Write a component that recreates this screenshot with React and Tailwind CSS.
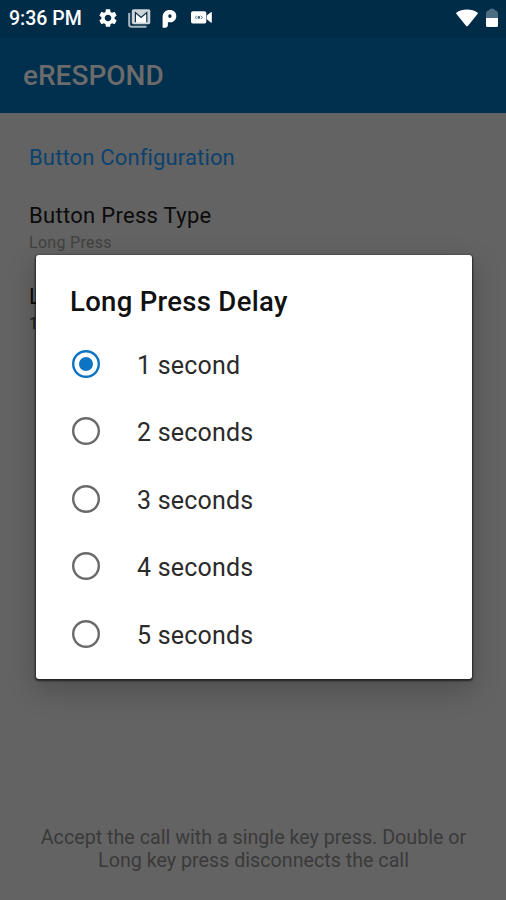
import { MdSettings } from 'react-icons/md';

const options = ['1 second', '2 seconds', '3 seconds', '4 seconds', '5 seconds'];

const GmailIcon = () => (
  <svg width="23" height="19" viewBox="0 0 23 19">
    <path d="M1.2 4v11.5a2.3 2.3 0 0 0 2.3 2.3H18.5" fill="none" stroke="#a9b6c0" strokeWidth="2" />
    <rect x="3.8" y="0.3" width="18.5" height="15" rx="1.8" fill="#ccd4da" />
    <path d="M7.4 13.500V4l5.700 5 5.700-5v9.500z" fill="#fff" />
    <path d="M7.400 13.200V3.500l5.700 5 5.700-5V13.200" fill="none" stroke="#0d3047" strokeWidth="1.2" />
  </svg>
);

const PandoraIcon = () => (
  <svg width="15" height="18" viewBox="0 0 15 18">
    <path
      d="M7.800 0c4 0 6.500 2.400 6.500 5.900 0 3.700-2.600 6.400-6.300 6.400H5.900v2.400c0 1.900-1 3-2.700 3H.6V7C.6 2.700 3.500 0 7.800 0z"
      fill="#fff"
    />
    <ellipse cx="7.900" cy="6.100" rx="1.700" ry="1.900" fill="#0d3047" />
  </svg>
);

const CameraIcon = () => (
  <svg width="22" height="13" viewBox="0 0 22 13">
    <rect x="0" y="0.300" width="15.300" height="12.200" rx="1.800" fill="#fff" />
    <path d="M15.800 4.500l4-3.300q1-.6 1 .6v9.200q0 1.200-1 .6l-4-3.300z" fill="#fff" />
    <path d="M6 4.800L4 6.400l2 1.600M9.700 4.800l2 1.600-2 1.600" fill="none" stroke="#6c8797" />
    <circle cx="7.850" cy="6.400" r="1.300" fill="#375a70" />
  </svg>
);

const StatusBar = () => (
  <div className="flex h-[37px] items-center bg-[#002c48] pl-[9px] pr-2">
    <span className="w-[90px] whitespace-nowrap text-[19.500px] font-medium leading-none text-white">9:36 PM</span>
    <MdSettings size={22} className="-ml-[2px] -mt-[2px] text-white" />
    <div className="-mt-px ml-[9px]"><GmailIcon /></div>
    <div className="ml-[11px]"><PandoraIcon /></div>
    <div className="-mt-[2px] ml-[14px]"><CameraIcon /></div>
    <svg className="-mt-[2px] ml-auto" width="22" height="18" viewBox="0 0 22 18">
      <path d="M.3 3.800C6-.6 16-.6 21.700 3.800q.4.500 0 1L12 16.800q-1 1-2 0L.3 4.800q-.4-.5 0-1z" fill="#fff" />
    </svg>
    <svg className="-mt-[2px] ml-2" width="12" height="20" viewBox="0 0 12 20">
      <path d="M0 10V6Q0 3 3 2.300 3.500.5 6 .5t3 1.800Q12 3 12 6v4z" fill="#4d6e82" />
      <path d="M0 10h12v7.500q0 1.500-1.500 1.500h-9Q0 19 0 17.500z" fill="#fff" />
    </svg>
  </div>
);

const RadioOption = ({ label, checked }) => (
  <label className="flex h-[67.500px] items-center">
    <svg width="28" height="28" viewBox="0 0 28 28" fill="none" className={checked ? 'text-[#0b74c4]' : 'text-[#6a6a6a]'}>
      <circle cx="14" cy="14" r="12.800" stroke="currentColor" strokeWidth="2.400" />
      {checked && <circle cx="14" cy="14" r="7" fill="currentColor" />}
    </svg>
    <span className="ml-[37px] pt-[3px] text-[25px] leading-none tracking-[0.2px] text-[#2b2b2b]">{label}</span>
  </label>
);

export default function App() {
  return (
    <div className="relative flex h-[900px] w-[506px] flex-col overflow-hidden bg-[#636363] font-['Roboto',sans-serif]">
      <header className="h-[113px] bg-[#00304e]">
        <StatusBar />
        <h1 className="pl-[23px] pt-[23px] text-[28px] font-medium leading-8 text-[#6b6b6b]">eRESPOND</h1>
      </header>

      <main className="flex flex-1 flex-col pl-[29px] pt-[31px]">
        <h2 className="text-[22px] leading-7 tracking-[0.150px] text-[#0b426e]">Button Configuration</h2>
        <div className="mt-[30px]">
          <div className="text-[22px] leading-7 tracking-[0.300px] text-[#0b0b0b]">Button Press Type</div>
          <div className="pt-px text-[16px] leading-6 tracking-[0.300px] text-[#414141]">Long Press</div>
        </div>
        <div className="mt-[28px]">
          <div className="text-[22px] leading-7 tracking-[0.300px] text-[#0b0b0b]">Long Press Delay</div>
          <div className="pt-px text-[16px] leading-6 text-[#1b1b1b]">1 second</div>
        </div>
        <p className="mb-[28px] mt-auto pr-[28px] text-center text-[19.700px] leading-[23px] text-[#3a3a3a]">
          Accept the call with a single key press. Double or
          <br />
          Long key press disconnects the call
        </p>
      </main>

      <div className="absolute left-9 top-[255px] h-[424px] w-[436px] rounded-[3px] bg-white pl-9 pt-[31px] shadow-[0_1px_2px_1px_rgba(0,0,0,0.6),0_10px_28px_2px_rgba(0,0,0,0.2)]">
        <h3 className="-ml-[2px] text-[27.500px] font-medium leading-8 tracking-[0.300px] text-[#111]">Long Press Delay</h3>
        <div className="mt-[12px]">
          {options.map((label, i) => (
            <RadioOption key={label} label={label} checked={i === 0} />
          ))}
        </div>
      </div>
    </div>
  );
}
